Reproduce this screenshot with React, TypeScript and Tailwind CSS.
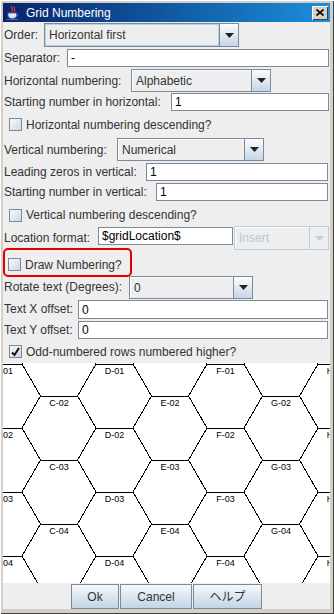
import React from "react";

const letters = ["B", "C", "D", "E", "F", "G", "H"];

function Field({ className, value = "" }: { className: string; value?: string }) {
  return (
    <div
      className={`bg-white border border-[#7a8a99] flex items-center pl-[3px] text-black shrink-0 ${className}`}
    >
      {value}
    </div>
  );
}

function Arrow({ color = "#000000" }: { color?: string }) {
  return (
    <svg width="9" height="5" viewBox="0 0 9 5">
      <path d="M0 0h9L4.5 5z" fill={color} />
    </svg>
  );
}

function Combo({
  className,
  value,
  focus,
  disabled,
}: {
  className: string;
  value: string;
  focus?: boolean;
  disabled?: boolean;
}) {
  return (
    <div
      className={`flex shrink-0 border ${
        disabled ? "border-[#b8cfe5]" : "border-[#7a8a99]"
      } ${className}`}
    >
      <div
        className={`flex-1 flex items-center pl-[4px] bg-[#eeeeee] ${
          focus ? "shadow-[inset_0_0_0_1px_#b8cfe5]" : "shadow-[inset_1px_1px_0_#ffffff]"
        } ${disabled ? "text-[#b8c6d4]" : "text-[#333333]"}`}
      >
        {value}
      </div>
      <div
        className={`w-[19px] flex items-center justify-center border-l ${
          disabled
            ? "border-[#b8cfe5] bg-[#eeeeee]"
            : "border-[#7a8a99] bg-linear-to-b from-[#fbfcfe] to-[#c6d6e7]"
        }`}
      >
        <Arrow color={disabled ? "#b8cfe5" : "#222222"} />
      </div>
    </div>
  );
}

function Check({ checked }: { checked?: boolean }) {
  return (
    <div className="w-[13px] h-[13px] shrink-0 border border-[#7a8a99] bg-linear-to-br from-[#f7f9fc] to-[#c9d8e8] flex items-center justify-center">
      {checked && (
        <svg width="11" height="11" viewBox="0 0 11 11">
          <path d="M2 6.5L4.5 9L9 2" stroke="#111111" strokeWidth="2" fill="none" />
        </svg>
      )}
    </div>
  );
}

function HexGrid() {
  const shapes: React.ReactNode[] = [];
  letters.forEach((letter, i) => {
    const cx = 3.5 + 55.5 * i;
    const base = i % 2 === 0 ? 364 : 332;
    for (let n = 0; n < 6; n++) {
      const top = base + 64 * (n - 1);
      const pts = [
        [cx - 18.5, top],
        [cx + 18.5, top],
        [cx + 37, top + 32],
        [cx + 18.5, top + 64],
        [cx - 18.5, top + 64],
        [cx - 37, top + 32],
      ]
        .map((p) => p.join(","))
        .join(" ");
      shapes.push(
        <polygon key={`p${letter}${n}`} points={pts} fill="none" stroke="#000000" strokeWidth="1" />
      );
      // only the labels that fall inside the canvas
      if (n > 0 && top >= 360 && top < 575) {
        shapes.push(
          <text
            key={`t${letter}${n}`}
            x={cx}
            y={top + 9.5}
            fontSize="9"
            textAnchor="middle"
            fill="#000000"
            fontFamily="'Liberation Sans', Arial, sans-serif"
          >
            {`${letter}-${String(n).padStart(2, "0")}`}
          </text>
        );
      }
    }
  });
  return (
    <svg width="327" height="220" viewBox="3 363 327 220" shapeRendering="crispEdges">
      {shapes}
    </svg>
  );
}

export default function App() {
  return (
    <div className="w-[334px] h-[614px] flex flex-col bg-[#d4d0c8] pt-[3px] pl-[3px] pr-[4px] pb-[5px] shadow-[inset_1px_1px_0_#ffffff,inset_-1px_-1px_0_#404040] font-['Liberation_Sans','Noto_Sans_CJK_JP',sans-serif] text-[12px] text-[#333333]">
      {/* title bar */}
      <div className="h-[19px] shrink-0 flex items-center bg-linear-to-r from-[#0a246a] to-[#1d8fdb] text-white">
        <svg width="16" height="16" viewBox="0 0 16 16" className="ml-[2px]">
          <path d="M7 1c-2 2 2 3 0 5.5M9.5 2c-1.5 1.5 1.5 2.5 0 4.5" stroke="#e33b22" fill="none" strokeWidth="1.3" />
          <path d="M3 8h8.5v2.5c0 2-2 3-4.2 3S3 12.5 3 10.5z" fill="#e8e8e8" stroke="#4a6fc0" />
          <path d="M11.5 9c2 0 2 2.5 0 2.5" stroke="#4a6fc0" fill="none" />
          <path d="M1.5 14.5h12" stroke="#3a5fb0" strokeWidth="1.3" />
        </svg>
        <span className="ml-[5px] text-[12px]">Grid Numbering</span>
        <div className="ml-auto mr-[2px] w-[16px] h-[14px] bg-[#d4d0c8] shadow-[inset_1px_1px_0_#ffffff,inset_-1px_-1px_0_#404040] flex items-center justify-center">
          <svg width="8" height="7" viewBox="0 0 8 7">
            <path d="M0.5 0.5L7.5 6.5M7.5 0.5L0.5 6.5" stroke="#000000" strokeWidth="1.6" />
          </svg>
        </div>
      </div>

      {/* form */}
      <div className="flex-1 flex flex-col bg-[#eeeeee]">
        <div className="h-[26px] flex items-center">
          <span className="w-[41px] pl-[1px] shrink-0">Order:</span>
          <Combo className="w-[195px] h-[24px]" value="Horizontal first" focus />
        </div>

        <div className="h-[20px] flex items-center">
          <span className="w-[64px] pl-[1px] shrink-0">Separator:</span>
          <Field className="w-[262px] h-[18px]" value="-" />
        </div>

        <div className="h-[25px] flex items-center">
          <span className="w-[128px] pl-[1px] shrink-0">Horizontal numbering:</span>
          <Combo className="w-[140px] h-[23px]" value="Alphabetic" />
        </div>

        <div className="h-[19px] flex items-start">
          <span className="w-[168px] pl-[1px] shrink-0 leading-[18px]">Starting number in horizontal:</span>
          <Field className="w-[158px] h-[18px]" value="1" />
        </div>

        <div className="h-[25px] flex items-center pl-[6px] gap-[4px]">
          <Check />
          <span>Horizontal numbering descending?</span>
        </div>

        <div className="h-[25px] flex items-center">
          <span className="w-[114px] pl-[1px] shrink-0">Vertical numbering:</span>
          <Combo className="w-[147px] h-[23px]" value="Numerical" />
        </div>

        <div className="h-[20px] flex items-center">
          <span className="w-[143px] pl-[1px] shrink-0">Leading zeros in vertical:</span>
          <Field className="w-[182px] h-[18px]" value="1" />
        </div>

        <div className="h-[20px] flex items-center">
          <span className="w-[153px] pl-[1px] shrink-0">Starting number in vertical:</span>
          <Field className="w-[172px] h-[18px]" value="1" />
        </div>

        <div className="h-[24px] flex items-center pl-[6px] gap-[4px] pt-[2px]">
          <Check />
          <span>Vertical numbering descending?</span>
        </div>

        <div className="h-[24px] flex items-center">
          <span className="w-[95px] pl-[1px] shrink-0">Location format:</span>
          <Field className="w-[135px] h-[18px] self-start mt-[1px]" value="$gridLocation$" />
          <Combo className="w-[95px] h-[24px] ml-[1px]" value="Insert" disabled />
        </div>

        {/* highlighted option */}
        <div className="h-[26px] flex">
          <div className="relative z-10 -mt-[2px] w-[129px] h-[29px] shrink-0 border-2 border-[#e00000] rounded-[5px] flex items-center pl-[3px] pt-[4px] gap-[4px]">
            <Check />
            <span>Draw Numbering?</span>
          </div>
        </div>

        <div className="h-[24px] flex items-start">
          <span className="w-[126px] pl-[1px] shrink-0 leading-[23px]">Rotate text (Degrees):</span>
          <Combo className="w-[124px] h-[23px]" value="0" />
        </div>

        <div className="h-[20px] flex items-start">
          <span className="w-[75px] pl-[1px] shrink-0 leading-[19px]">Text X offset:</span>
          <Field className="w-[250px] h-[19px]" value="0" />
        </div>

        <div className="h-[20px] flex items-center">
          <span className="w-[75px] pl-[1px] shrink-0">Text Y offset:</span>
          <Field className="w-[250px] h-[18px]" value="0" />
        </div>

        <div className="h-[23px] flex items-center pl-[6px] gap-[4px]">
          <Check checked />
          <span>Odd-numbered rows numbered higher?</span>
        </div>

        <div className="h-[220px] shrink-0 bg-white overflow-hidden">
          <HexGrid />
        </div>

        <div className="h-[26px] flex items-end justify-center gap-[1px]">
          <button className="w-[48px] h-[25px] border border-[#7a8a99] bg-linear-to-b from-[#f6f8fb] to-[#c3d4e6] text-[#333333]">
            Ok
          </button>
          <button className="w-[72px] h-[25px] border border-[#7a8a99] bg-linear-to-b from-[#f6f8fb] to-[#c3d4e6] text-[#333333]">
            Cancel
          </button>
          <button className="w-[69px] h-[25px] border border-[#7a8a99] bg-linear-to-b from-[#f6f8fb] to-[#c3d4e6] text-[#333333]">
            ヘルプ
          </button>
        </div>
      </div>
    </div>
  );
}
